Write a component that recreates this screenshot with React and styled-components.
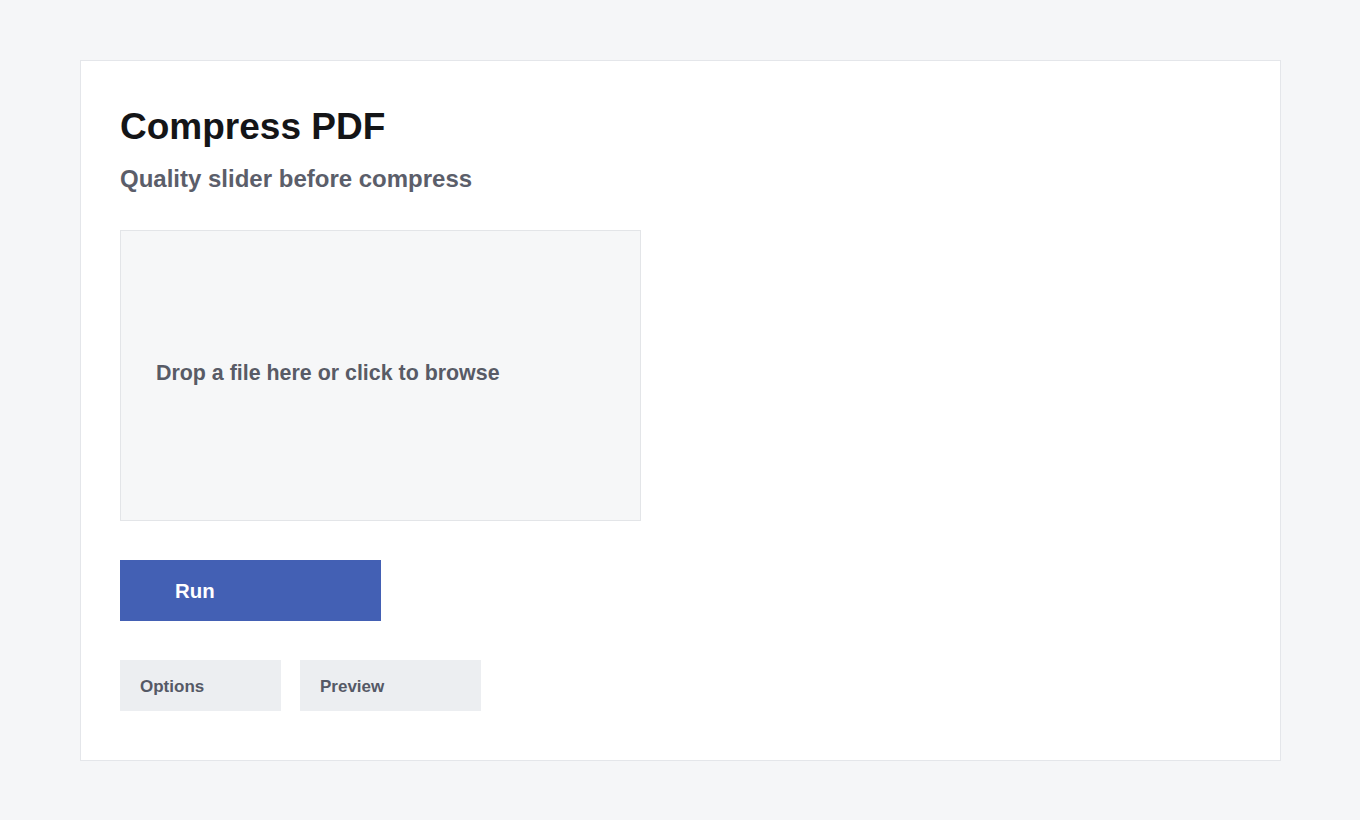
import React from "react";
import styled, { createGlobalStyle } from "styled-components";

const Global = createGlobalStyle`
  html, body {
    margin: 0;
    padding: 0;
    background: #f5f6f8;
    font-family: "Liberation Sans", Arial, sans-serif;
  }
  * { box-sizing: border-box; }
`;

const Page = styled.div`
  padding: 60px 80px;
  min-height: 820px;
`;

const Card = styled.section`
  width: 1201px;
  height: 701px;
  background: #ffffff;
  border: 1px solid #e4e6ea;
  padding: 39px 39px;
  display: flex;
  flex-direction: column;
  align-items: flex-start;
`;

const Title = styled.h1`
  margin: 0;
  font-size: 37px;
  line-height: 54px;
  font-weight: 700;
  color: #141517;
`;

const Subtitle = styled.h2`
  margin: 9px 0 0;
  font-size: 24px;
  line-height: 32px;
  font-weight: 700;
  color: #5b5e6a;
`;

const DropZone = styled.div`
  margin-top: 35px;
  width: 521px;
  height: 291px;
  background: #f6f7f8;
  border: 1px solid #e3e5e8;
  display: flex;
  align-items: center;
  padding: 0 0 4px 35px;
  font-size: 21.4px;
  font-weight: 700;
  color: #585b66;
  cursor: pointer;
`;

const RunButton = styled.button`
  margin-top: 39px;
  width: 261px;
  height: 61px;
  border: none;
  background: #4360b4;
  color: #ffffff;
  font-family: inherit;
  font-size: 20.4px;
  font-weight: 700;
  text-align: left;
  padding: 1px 0 0 55px;
  cursor: pointer;
`;

const Tabs = styled.div`
  margin-top: 39px;
  display: flex;
  gap: 19px;
`;

const Tab = styled.button`
  width: ${(p) => p.$w}px;
  height: 51px;
  border: none;
  background: #eceef1;
  color: #555966;
  font-family: inherit;
  font-size: 17px;
  font-weight: 700;
  text-align: left;
  padding: 2px 0 0 20px;
  cursor: pointer;
`;

export default function App() {
  return (
    <>
      <Global />
      <Page>
        <Card>
          <Title>Compress PDF</Title>
          <Subtitle>Quality slider before compress</Subtitle>
          <DropZone>Drop a file here or click to browse</DropZone>
          <RunButton>Run</RunButton>
          <Tabs>
            <Tab $w={161}>Options</Tab>
            <Tab $w={181}>Preview</Tab>
          </Tabs>
        </Card>
      </Page>
    </>
  );
}
